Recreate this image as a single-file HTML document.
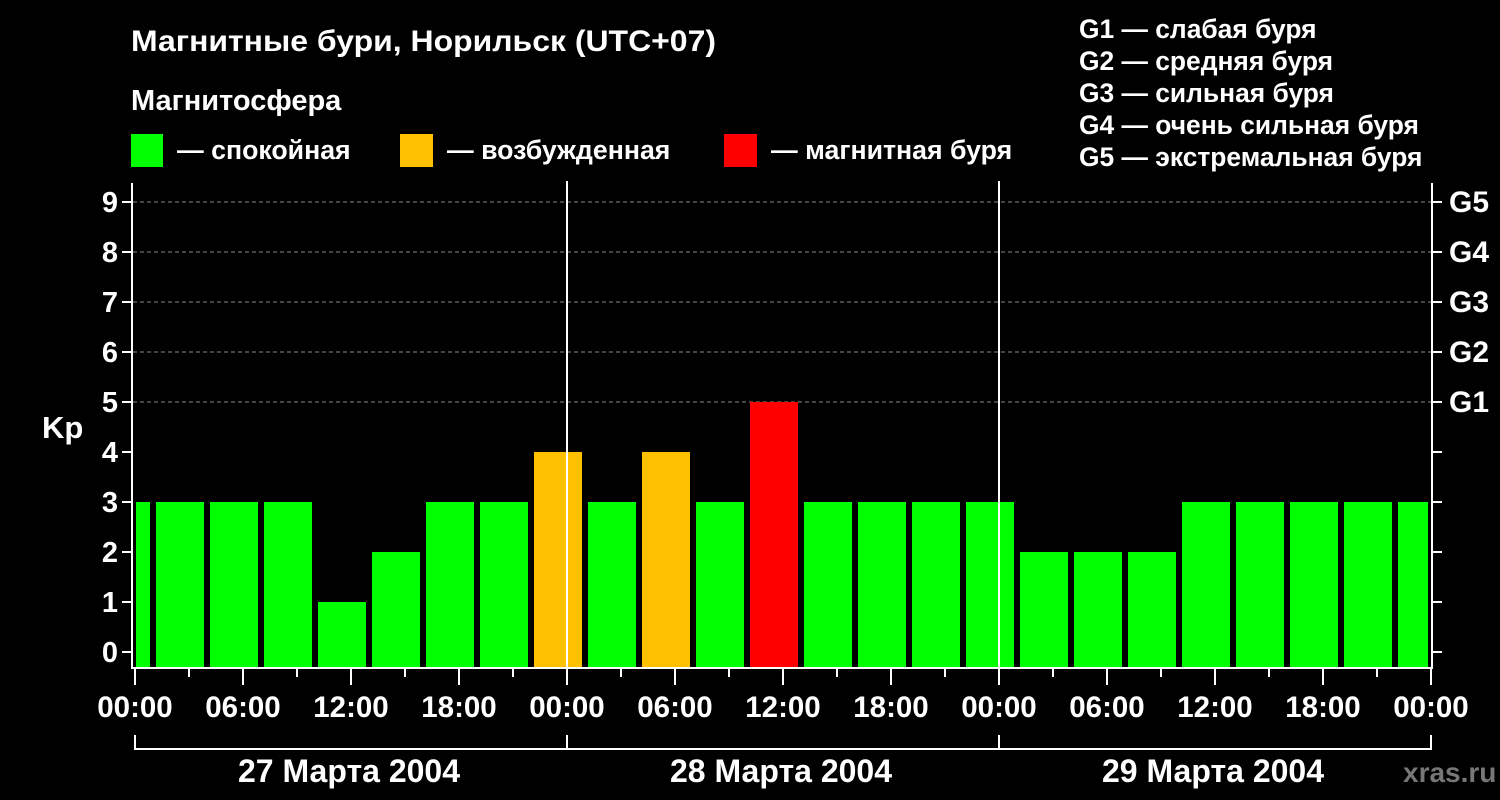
<!DOCTYPE html>
<html><head><meta charset="utf-8"><style>
html,body{margin:0;padding:0;background:#000;}
svg{display:block;}
text{font-family:"Liberation Sans",Arial,sans-serif;font-weight:bold;fill:#fff;}
</style></head><body>
<svg width="1500" height="800" xmlns="http://www.w3.org/2000/svg">
<rect width="1500" height="800" fill="#000"/>
<text x="131" y="51" font-size="30" textLength="585" lengthAdjust="spacingAndGlyphs">Магнитные бури, Норильск (UTC+07)</text>
<text x="131" y="110" font-size="29">Магнитосфера</text>
<rect x="131" y="134" width="32" height="33" fill="#00ff00"/>
<text x="177" y="159" font-size="26.7">— спокойная</text>
<rect x="400" y="134" width="33" height="33" fill="#ffc000"/>
<text x="447" y="159" font-size="26.7">— возбужденная</text>
<rect x="724" y="134" width="33" height="33" fill="#ff0000"/>
<text x="771" y="159" font-size="26.7">— магнитная буря</text>
<g font-size="26.4">
<text x="1079" y="38">G1 — слабая буря</text>
<text x="1079" y="70">G2 — средняя буря</text>
<text x="1079" y="102">G3 — сильная буря</text>
<text x="1079" y="134">G4 — очень сильная буря</text>
<text x="1079" y="166">G5 — экстремальная буря</text>
</g>
<g stroke="#888" stroke-width="1" stroke-dasharray="4,3">
<line x1="133" y1="402" x2="1431" y2="402"/>
<line x1="133" y1="352" x2="1431" y2="352"/>
<line x1="133" y1="302" x2="1431" y2="302"/>
<line x1="133" y1="252" x2="1431" y2="252"/>
<line x1="133" y1="202" x2="1431" y2="202"/>
</g>
<g>
<rect x="136" y="502" width="14" height="166" fill="#00ff00"/>
<rect x="156" y="502" width="48" height="166" fill="#00ff00"/>
<rect x="210" y="502" width="48" height="166" fill="#00ff00"/>
<rect x="264" y="502" width="48" height="166" fill="#00ff00"/>
<rect x="318" y="602" width="48" height="66" fill="#00ff00"/>
<rect x="372" y="552" width="48" height="116" fill="#00ff00"/>
<rect x="426" y="502" width="48" height="166" fill="#00ff00"/>
<rect x="480" y="502" width="48" height="166" fill="#00ff00"/>
<rect x="534" y="452" width="48" height="216" fill="#ffc000"/>
<rect x="588" y="502" width="48" height="166" fill="#00ff00"/>
<rect x="642" y="452" width="48" height="216" fill="#ffc000"/>
<rect x="696" y="502" width="48" height="166" fill="#00ff00"/>
<rect x="750" y="402" width="48" height="266" fill="#ff0000"/>
<rect x="804" y="502" width="48" height="166" fill="#00ff00"/>
<rect x="858" y="502" width="48" height="166" fill="#00ff00"/>
<rect x="912" y="502" width="48" height="166" fill="#00ff00"/>
<rect x="966" y="502" width="48" height="166" fill="#00ff00"/>
<rect x="1020" y="552" width="48" height="116" fill="#00ff00"/>
<rect x="1074" y="552" width="48" height="116" fill="#00ff00"/>
<rect x="1128" y="552" width="48" height="116" fill="#00ff00"/>
<rect x="1182" y="502" width="48" height="166" fill="#00ff00"/>
<rect x="1236" y="502" width="48" height="166" fill="#00ff00"/>
<rect x="1290" y="502" width="48" height="166" fill="#00ff00"/>
<rect x="1344" y="502" width="48" height="166" fill="#00ff00"/>
<rect x="1398" y="502" width="30" height="166" fill="#00ff00"/>
</g>
<g stroke="#fff" stroke-width="2" fill="none">
<line x1="132" y1="183" x2="132" y2="669"/>
<line x1="1432" y1="183" x2="1432" y2="669"/>
<line x1="131" y1="668" x2="1433" y2="668"/>
<line x1="567" y1="181" x2="567" y2="668"/>
<line x1="999" y1="181" x2="999" y2="668"/>
<path d="M122 652H131M122 602H131M122 552H131M122 502H131M122 452H131M122 402H131M122 352H131M122 302H131M122 252H131M122 202H131"/>
<path d="M1433 652H1442M1433 602H1442M1433 552H1442M1433 502H1442M1433 452H1442M1433 402H1442M1433 352H1442M1433 302H1442M1433 252H1442M1433 202H1442"/>
<path d="M135 669V685M189 669V677M243 669V685M297 669V677M351 669V685M405 669V677M459 669V685M513 669V677M567 669V685M621 669V677M675 669V685M729 669V677M783 669V685M837 669V677M891 669V685M945 669V677M999 669V685M1053 669V677M1107 669V685M1161 669V677M1215 669V685M1269 669V677M1323 669V685M1377 669V677M1431 669V685"/>
<path d="M135 735V749H1431V735M567 735V749M999 735V749"/>
</g>
<g font-size="29" text-anchor="end">
<text x="118" y="662">0</text><text x="118" y="612">1</text><text x="118" y="562">2</text><text x="118" y="512">3</text><text x="118" y="462">4</text><text x="118" y="412">5</text><text x="118" y="362">6</text><text x="118" y="312">7</text><text x="118" y="262">8</text><text x="118" y="212">9</text>
</g>
<text x="42" y="438" font-size="31">Kp</text>
<g font-size="30">
<text x="1449" y="412">G1</text><text x="1449" y="362">G2</text><text x="1449" y="312">G3</text><text x="1449" y="262">G4</text><text x="1449" y="212">G5</text>
</g>
<g font-size="29.5" text-anchor="middle">
<text x="135" y="717">00:00</text><text x="243" y="717">06:00</text><text x="351" y="717">12:00</text><text x="459" y="717">18:00</text>
<text x="567" y="717">00:00</text><text x="675" y="717">06:00</text><text x="783" y="717">12:00</text><text x="891" y="717">18:00</text>
<text x="999" y="717">00:00</text><text x="1107" y="717">06:00</text><text x="1215" y="717">12:00</text><text x="1323" y="717">18:00</text>
<text x="1431" y="717">00:00</text>
<text x="349" y="782" font-size="32">27 Марта 2004</text>
<text x="781" y="782" font-size="32">28 Марта 2004</text>
<text x="1213" y="782" font-size="32">29 Марта 2004</text>
</g>
<text x="1403" y="782" font-size="28" style="fill:#777">xras.ru</text>
</svg>
</body></html>
